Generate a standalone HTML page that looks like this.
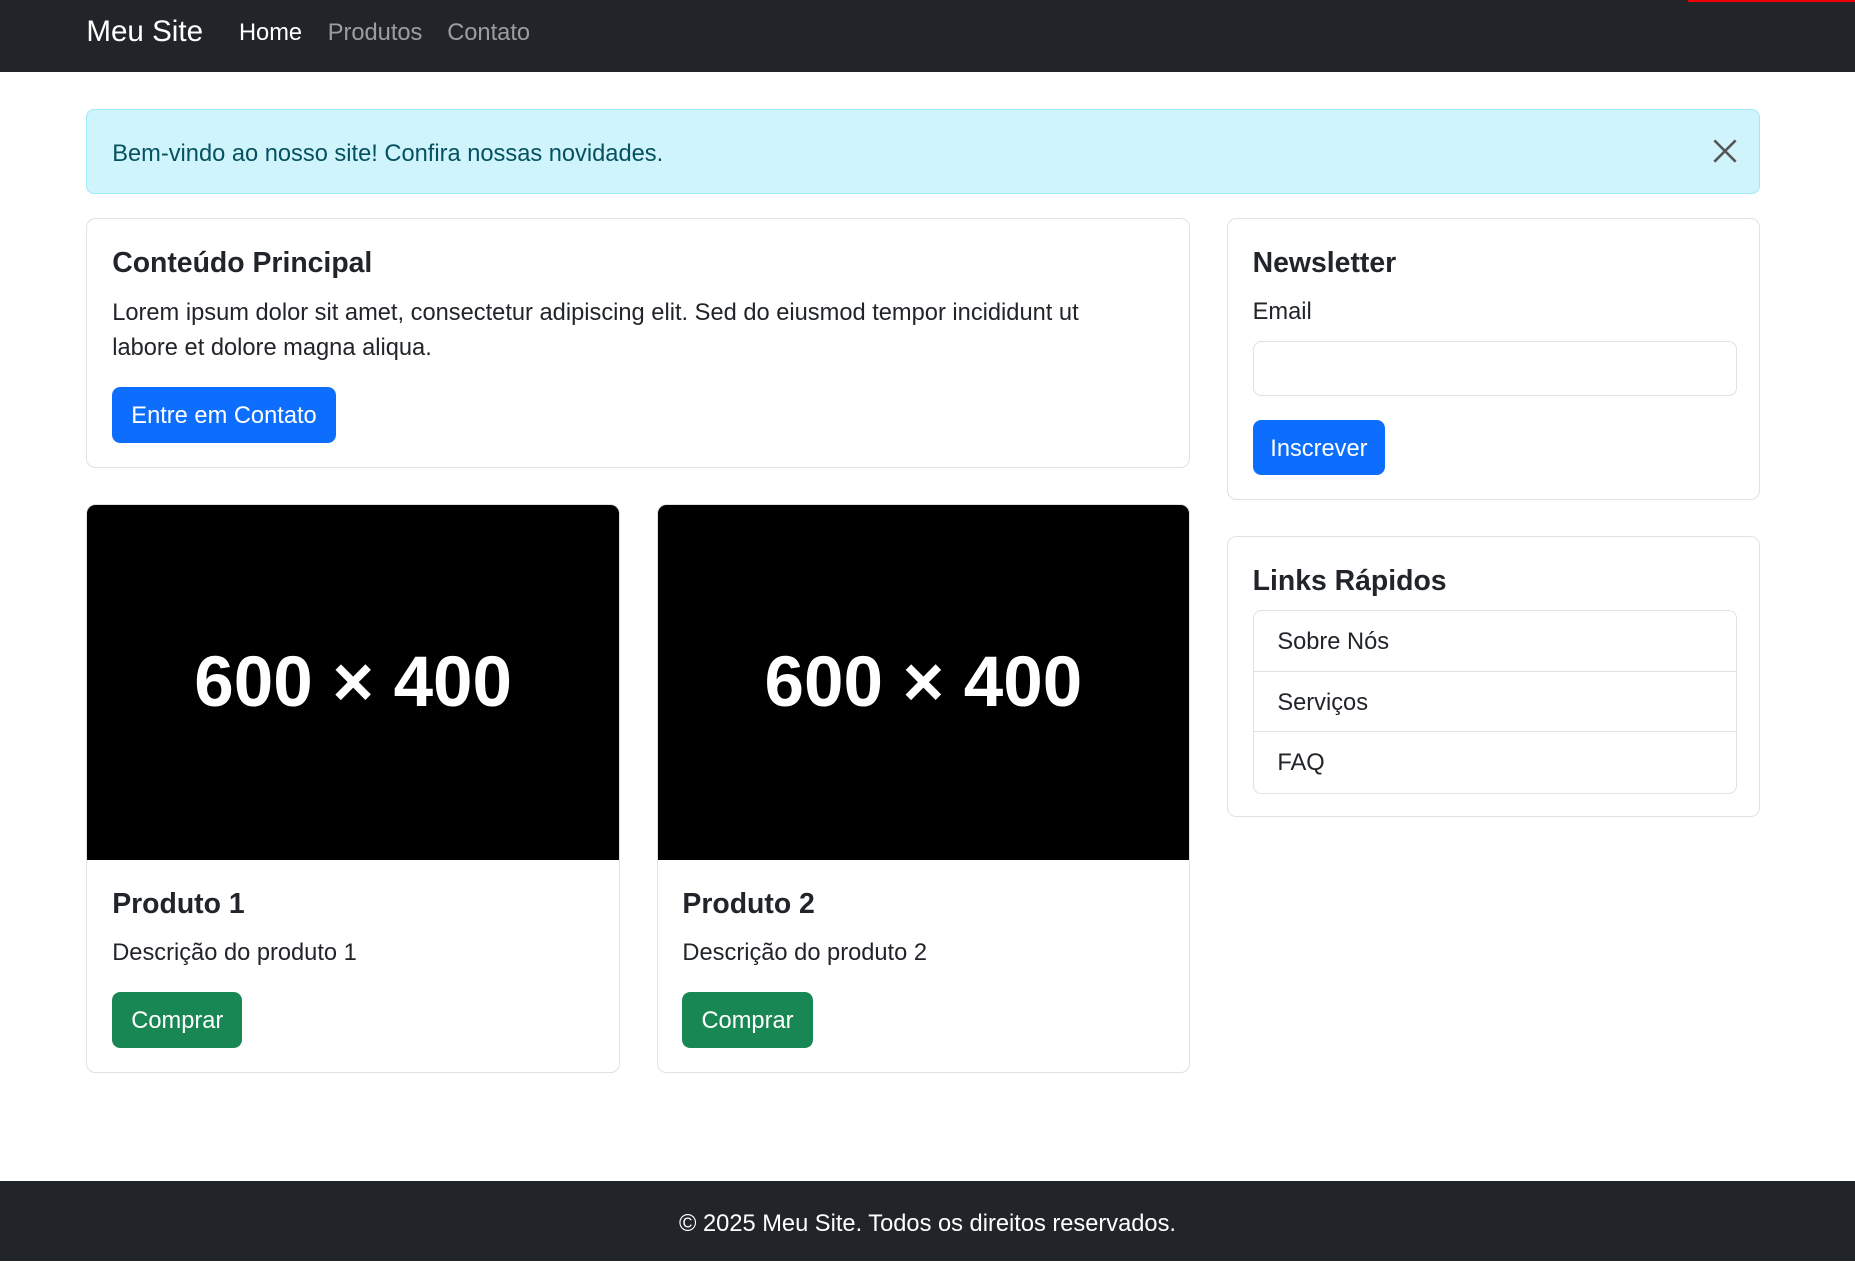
<!DOCTYPE html>
<html><head><meta charset="utf-8"><style>
html{zoom:1.18304}
body{margin:0;width:1568px;height:1066px;position:relative;font-family:"Liberation Sans",sans-serif;color:#212529;font-size:20px;background:#fff;overflow:hidden}
.a{position:absolute;box-sizing:border-box}
.nav{left:0;top:0;width:1568px;height:61px;background:#212529}
.card{border:1px solid #dee2e6;border-radius:8px;background:#fff;overflow:hidden}
h5{margin:0;font-size:24px;font-weight:600;position:absolute}
.btn{position:absolute;color:#fff;border-radius:7px;font-size:20px;display:flex;align-items:center;justify-content:center;padding-top:3px;box-sizing:border-box}
.img{background:#000;color:#fff;font-size:60px;font-weight:bold;display:flex;align-items:center;justify-content:center;left:0;top:0;right:0;height:300px;position:absolute}
.li{position:absolute;left:0;right:0;height:51px;border-bottom:1px solid #dee2e6;padding-left:20px;line-height:53px;font-size:20px;box-sizing:border-box}
</style></head><body>
<div class="a nav">
 <div class="a" style="left:73px;top:13px;font-size:25px;color:#fff">Meu Site</div>
 <div class="a" style="left:202px;top:17px;color:#fff">Home</div>
 <div class="a" style="left:277px;top:17px;color:rgba(255,255,255,.55)">Produtos</div>
 <div class="a" style="left:378px;top:17px;color:rgba(255,255,255,.55)">Contato</div>
 <div class="a" style="left:1427px;top:0;width:141px;height:2px;background:#e00"></div>
</div>
<div class="a" style="left:73px;top:92px;width:1415px;height:72px;background:#cff4fc;border:1px solid #9eeaf9;border-radius:7px;color:#055160">
 <div class="a" style="left:21px;top:26px">Bem-vindo ao nosso site! Confira nossas novidades.</div>
 <svg class="a" style="left:1373px;top:24px" width="22" height="22" viewBox="0 0 22 22"><path d="M2 2L20 20M20 2L2 20" stroke="#555" stroke-width="2.2"/></svg>
</div>
<div class="a card" style="left:73px;top:184px;width:933px;height:212px">
 <h5 style="left:21px;top:24px">Conteúdo Principal</h5>
 <div class="a" style="left:21px;top:65px;width:850px;line-height:30px">Lorem ipsum dolor sit amet, consectetur adipiscing elit. Sed do eiusmod tempor incididunt ut labore et dolore magna aliqua.</div>
 <div class="btn" style="left:21px;top:142px;width:189px;height:48px;background:#0d6efd">Entre em Contato</div>
</div>
<div class="a card" style="left:73px;top:426px;width:451px;height:481px">
 <div class="img">600 × 400</div>
 <h5 style="left:21px;top:324px">Produto 1</h5>
 <div class="a" style="left:21px;top:368px">Descrição do produto 1</div>
 <div class="btn" style="left:21px;top:412px;width:110px;height:47px;background:#198754">Comprar</div>
</div>
<div class="a card" style="left:555px;top:426px;width:451px;height:481px">
 <div class="img">600 × 400</div>
 <h5 style="left:21px;top:324px">Produto 2</h5>
 <div class="a" style="left:21px;top:368px">Descrição do produto 2</div>
 <div class="btn" style="left:21px;top:412px;width:110px;height:47px;background:#198754">Comprar</div>
</div>
<div class="a card" style="left:1037px;top:184px;width:451px;height:239px">
 <h5 style="left:21px;top:24px">Newsletter</h5>
 <div class="a" style="left:21px;top:68px">Email</div>
 <div class="a" style="left:21px;top:103px;width:409px;height:47px;border:1px solid #dee2e6;border-radius:7px"></div>
 <div class="btn" style="left:21px;top:170px;width:112px;height:47px;background:#0d6efd">Inscrever</div>
</div>
<div class="a card" style="left:1037px;top:453px;width:451px;height:238px">
 <h5 style="left:21px;top:24px">Links Rápidos</h5>
 <div class="a" style="left:21px;top:62px;width:409px;height:155px;border:1px solid #dee2e6;border-radius:7px;overflow:hidden">
  <div class="li" style="top:0">Sobre Nós</div>
  <div class="li" style="top:51px">Serviços</div>
  <div class="li" style="top:102px;border:0">FAQ</div>
 </div>
</div>
<div class="a" style="left:0;top:998px;width:1568px;height:68px;background:#212529;color:#fff;text-align:center;line-height:74px">© 2025 Meu Site. Todos os direitos reservados.</div>
</body></html>
